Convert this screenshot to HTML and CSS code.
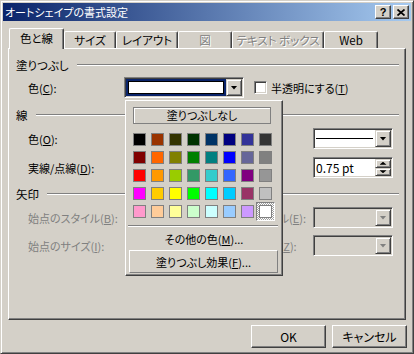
FILE: index.html
```html
<!DOCTYPE html>
<html lang="ja">
<head>
<meta charset="utf-8">
<title>オートシェイプの書式設定</title>
<link rel="stylesheet" href="styles.css">
</head>
<body>
<div class="window">
  <div class="titlebar">
    <span class="title">オートシェイプの書式設定</span>
    <span class="tbtn help">?</span>
    <span class="tbtn close"><svg width="8" height="7" viewBox="0 0 8 7"><path d="M0.5 0.5L7.5 6.5M7.5 0.5L0.5 6.5" stroke="#000" stroke-width="1.7" fill="none"/></svg></span>
  </div>

  <div class="tabs">
    <div class="tab sel w55">色と線</div>
    <div class="tab w52">サイズ</div>
    <div class="tab w62">レイアウト</div>
    <div class="tab dis w54">図</div>
    <div class="tab dis w92">テキスト ボックス</div>
    <div class="tab w54">Web</div>
  </div>

  <div class="panel">
    <div class="sec"><span>塗りつぶし</span><i class="rule"></i></div>
    <div class="row fillrow gap5">
      <span class="lbl">色(<u>C</u>):</span>
      <div class="combo colorcombo">
        <div class="field hl"><span class="cur"></span></div>
        <span class="dd"><i class="tri"></i></span>
      </div>
      <span class="chk"><span class="box"></span>半透明にする(<u>T</u>)</span>
    </div>

    <div class="sec gap10"><span>線</span><i class="rule"></i></div>
    <div class="row grid gap6">
      <span class="lbl">色(<u>O</u>):</span>
      <div class="combo rcombo">
        <div class="field"><i class="line"></i></div>
        <span class="dd"><i class="tri"></i></span>
      </div>
    </div>
    <div class="row grid gap8">
      <span class="lbl">実線/点線(<u>D</u>):</span>
      <div class="combo rcombo">
        <div class="field text">0.75 pt</div>
        <span class="spins">
          <span class="sbtn"><i class="tri up"></i></span>
          <span class="sbtn"><i class="tri small"></i></span>
        </span>
      </div>
    </div>

    <div class="sec gap9"><span>矢印</span><i class="rule"></i></div>
    <div class="row grid dis gap6">
      <span class="lbl">始点のスタイル(<u>B</u>):</span>
      <span class="rlbl">終点のスタイル(<u>E</u>):</span>
      <div class="combo rcombo off">
        <div class="field"></div>
        <span class="dd"><i class="tri"></i></span>
      </div>
    </div>
    <div class="row grid dis gap7">
      <span class="lbl">始点のサイズ(<u>I</u>):</span>
      <span class="rlbl">終点のサイズ(<u>Z</u>):</span>
      <div class="combo rcombo off">
        <div class="field"></div>
        <span class="dd"><i class="tri"></i></span>
      </div>
    </div>

    <div class="popup">
      <div class="nofill">塗りつぶしなし</div>
      <div class="swatches">
        <i style="background:#000000"></i><i style="background:#993300"></i><i style="background:#333300"></i><i style="background:#003300"></i><i style="background:#003366"></i><i style="background:#000080"></i><i style="background:#333399"></i><i style="background:#333333"></i>
        <i style="background:#800000"></i><i style="background:#ff6600"></i><i style="background:#808000"></i><i style="background:#008000"></i><i style="background:#008080"></i><i style="background:#0000ff"></i><i style="background:#666699"></i><i style="background:#808080"></i>
        <i style="background:#ff0000"></i><i style="background:#ff9900"></i><i style="background:#99cc00"></i><i style="background:#339966"></i><i style="background:#33cccc"></i><i style="background:#3366ff"></i><i style="background:#800080"></i><i style="background:#969696"></i>
        <i style="background:#ff00ff"></i><i style="background:#ffcc00"></i><i style="background:#ffff00"></i><i style="background:#00ff00"></i><i style="background:#00ffff"></i><i style="background:#00ccff"></i><i style="background:#993366"></i><i style="background:#c0c0c0"></i>
        <i style="background:#ff99cc"></i><i style="background:#ffcc99"></i><i style="background:#ffff99"></i><i style="background:#ccffcc"></i><i style="background:#ccffff"></i><i style="background:#99ccff"></i><i style="background:#cc99ff"></i><i class="selected" style="background:#ffffff"></i>
      </div>
      <div class="msep"></div>
      <div class="more">その他の色(<u>M</u>)...</div>
      <div class="effect">塗りつぶし効果(<u>F</u>)...</div>
    </div>
  </div>

  <div class="buttons">
    <div class="btn">OK</div>
    <div class="btn">キャンセル</div>
  </div>
</div>
</body>
</html>
```

FILE: styles.css
```css
* { box-sizing: border-box; }
html, body { margin: 0; padding: 0; }
body {
  width: 414px;
  height: 354px;
  overflow: hidden;
  background: #d4d0c8;
  font-family: "Noto Sans CJK JP", sans-serif;
  font-size: 11px;
  line-height: 14px;
  font-feature-settings: "palt" 1;
  color: #000;
}
u { text-decoration: underline; text-underline-offset: 1px; }
i { display: block; font-style: normal; }

.window {
  width: 414px;
  height: 354px;
  border: 1px solid;
  border-color: #d4d0c8 #404040 #404040 #d4d0c8;
  padding: 2px;
  box-shadow: inset 1px 1px #fff, inset -1px -1px #808080;
  background: #d4d0c8;
  display: flex;
  flex-direction: column;
}

/* title bar */
.titlebar {
  flex: none;
  height: 18px;
  display: flex;
  align-items: center;
  padding: 0 2px 0 2px;
  background: linear-gradient(to right, #0a246a, #a6caf0);
  color: #fff;
}
.title { flex: 1; white-space: nowrap; font-size: 11px; }
.tbtn {
  width: 16px;
  height: 14px;
  border: 1px solid;
  border-color: #fff #404040 #404040 #fff;
  box-shadow: inset -1px -1px #808080;
  background: #d4d0c8;
  display: flex;
  align-items: center;
  justify-content: center;
  color: #000;
}
.help { margin-right: 2px; font: bold 11px/1 "Liberation Sans", sans-serif; }

/* tabs */
.tabs {
  flex: none;
  display: flex;
  align-items: flex-end;
  height: 20px;
  margin: 7px 0 0 6px;
  position: relative;
  z-index: 1;
}
.tab {
  height: 17px;
  border-top: 1px solid #fff;
  border-left: 1px solid #fff;
  border-right: 1px solid #404040;
  box-shadow: inset -1px 0 #808080;
  border-radius: 2px 2px 0 0;
  background: #d4d0c8;
  display: flex;
  align-items: center;
  justify-content: center;
  white-space: nowrap;
  font-size: 11.5px;
}
.tab.sel { height: 21px; margin-bottom: -1px; padding-bottom: 2px; }
.tab.dis { color: #808080; text-shadow: 1px 1px #fff; }
.w52 { width: 52px; }
.w54 { width: 54px; }
.w55 { width: 55px; }
.w62 { width: 62px; }
.w92 { width: 92px; }

/* panel */
.panel {
  flex: none;
  margin-left: 5px;
  width: 398px;
  height: 272px;
  border: 1px solid;
  border-color: #fff #404040 #404040 #fff;
  box-shadow: inset -1px -1px #808080;
  position: relative;
  padding: 9px 6px 0 7px;
  display: flex;
  flex-direction: column;
}
.gap5 { margin-top: 5px; }
.gap6 { margin-top: 6px; }
.gap7 { margin-top: 7px; }
.gap8 { margin-top: 8px; }
.gap9 { margin-top: 9px; }
.gap10 { margin-top: 10px; }

.sec { display: flex; align-items: center; gap: 8px; height: 14px; white-space: nowrap; font-size: 11.5px; }
.rule { flex: 1; height: 2px; border-top: 1px solid #808080; border-bottom: 1px solid #fff; }

.row { height: 21px; align-items: center; white-space: nowrap; }
.lbl { padding-left: 12px; }
.fillrow { display: flex; }
.fillrow .lbl { width: 108px; }
.grid { display: grid; grid-template-columns: 108px 93px 96px 80px; }
.grid .lbl { grid-column: 1; }
.grid .rlbl { grid-column: 3; }
.grid .rcombo { grid-column: 4; }
.dis { color: #808080; }

/* combos */
.combo {
  height: 21px;
  display: flex;
  border: 1px solid;
  border-color: #808080 #fff #fff #808080;
  padding: 1px;
  box-shadow: inset 1px 1px #404040, inset -1px -1px #d4d0c8;
  background: #fff;
}
.combo.off { background: #d4d0c8; }
.field { flex: 1; height: 17px; display: flex; align-items: center; }
.field.text { padding-left: 1px; font-size: 12px; }
.field.hl { background: #0a246a; padding: 2px; }
.cur { display: block; width: 100%; height: 100%; background: #fff; border: 1px solid #000; }
.line { flex: 1; height: 1px; background: #000; margin: 0 2px 0 1px; }
.colorcombo { width: 120px; }
.dd {
  width: 16px;
  height: 17px;
  border: 1px solid;
  border-color: #d4d0c8 #404040 #404040 #d4d0c8;
  box-shadow: inset 1px 1px #fff, inset -1px -1px #808080;
  background: #d4d0c8;
  display: flex;
  align-items: center;
  justify-content: center;
}
.tri {
  width: 7px;
  height: 4px;
  background: #000;
  clip-path: polygon(0 0, 100% 0, 50% 100%);
}
.off .tri { background: #808080; }
.spins { width: 16px; height: 17px; display: flex; flex-direction: column; }
.sbtn {
  flex: 1;
  border: 1px solid;
  border-color: #d4d0c8 #404040 #404040 #d4d0c8;
  box-shadow: inset 1px 1px #fff, inset -1px -1px #808080;
  background: #d4d0c8;
  display: flex;
  align-items: center;
  justify-content: center;
}
.tri.up, .tri.small { width: 7px; height: 3px; }
.tri.up { clip-path: polygon(50% 0, 100% 100%, 0 100%); }

/* checkbox */
.chk { display: flex; align-items: center; margin-left: 10px; }
.box {
  width: 13px;
  height: 13px;
  margin-right: 4px;
  border: 1px solid;
  border-color: #808080 #fff #fff #808080;
  box-shadow: inset 1px 1px #404040, inset -1px -1px #d4d0c8;
  background: #fff;
}

/* colour popup */
.popup {
  position: absolute;
  left: 116px;
  top: 51px;
  width: 158px;
  z-index: 5;
  background: #d4d0c8;
  border: 1px solid;
  border-color: #fff #404040 #404040 #fff;
  box-shadow: inset -1px -1px #808080;
  padding-bottom: 2px;
  display: flex;
  flex-direction: column;
  white-space: nowrap;
}
.nofill {
  margin: 6px 0 0 7px;
  width: 138px;
  height: 17px;
  border: 1px solid #808080;
  box-shadow: inset 1px 1px #fff;
  text-align: center;
  line-height: 15px;
}
.swatches {
  margin: 9px 0 0 7px;
  display: grid;
  grid-template-columns: repeat(8, 13px);
  grid-auto-rows: 13px;
  gap: 5px;
}
.swatches i { border: 1px solid #808080; position: relative; }
.swatches i.selected::before {
  content: "";
  position: absolute;
  inset: -4px;
  z-index: -1;
  border: 1px solid;
  border-color: #808080 #fff #fff #808080;
  background: repeating-conic-gradient(#ffffff 0 25%, #a0a0a0 0 50%) 0 0 / 2px 2px;
}
.msep {
  margin: 7px 0 0 2px;
  width: 150px;
  border-top: 1px solid #808080;
  border-bottom: 1px solid #fff;
}
.more { margin-top: 5px; text-align: center; }
.effect {
  margin: 4px 0 0 3px;
  width: 149px;
  height: 23px;
  border: 1px solid;
  border-color: #fff #808080 #808080 #fff;
  display: flex;
  align-items: center;
  justify-content: center;
}

/* dialog buttons */
.buttons {
  flex: none;
  display: flex;
  justify-content: flex-end;
  gap: 6px;
  margin-top: 5px;
  padding-right: 4px;
}
.btn {
  width: 75px;
  height: 23px;
  border: 1px solid;
  border-color: #fff #404040 #404040 #fff;
  box-shadow: inset -1px -1px #808080;
  display: flex;
  align-items: center;
  justify-content: center;
  font-size: 12px;
}
```
